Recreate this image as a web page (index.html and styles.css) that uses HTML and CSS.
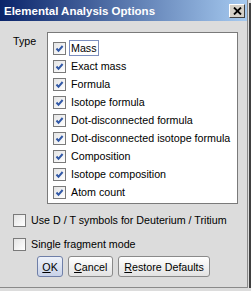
FILE: index.html
```html
<!DOCTYPE html>
<html lang="en">
<head>
  <meta charset="UTF-8">
  <title>Elemental Analysis Options</title>
  <link rel="stylesheet" href="styles.css">
</head>
<body>
  <div class="window">
    <div class="titlebar">
      <span class="title">Elemental Analysis Options</span>
      <span class="close">
        <svg width="9" height="8" viewBox="0 0 9 8"><path d="M1 0.5 L8 7.5 M8 0.5 L1 7.5" stroke="#000" stroke-width="1.8"/></svg>
      </span>
    </div>

    <div class="content">
      <div class="type-row">
        <span class="type-label">Type</span>
        <div class="list">
          <label class="check"><span class="box on"><svg width="11" height="11" viewBox="0 0 11 11"><path d="M2.5 5.5 L4.5 7.8 L8.6 3" fill="none" stroke="#3158a6" stroke-width="2"/></svg></span><span class="text focus">Mass</span></label>
          <label class="check"><span class="box on"><svg width="11" height="11" viewBox="0 0 11 11"><path d="M2.5 5.5 L4.5 7.8 L8.6 3" fill="none" stroke="#3158a6" stroke-width="2"/></svg></span><span class="text">Exact mass</span></label>
          <label class="check"><span class="box on"><svg width="11" height="11" viewBox="0 0 11 11"><path d="M2.5 5.5 L4.5 7.8 L8.6 3" fill="none" stroke="#3158a6" stroke-width="2"/></svg></span><span class="text">Formula</span></label>
          <label class="check"><span class="box on"><svg width="11" height="11" viewBox="0 0 11 11"><path d="M2.5 5.5 L4.5 7.8 L8.6 3" fill="none" stroke="#3158a6" stroke-width="2"/></svg></span><span class="text">Isotope formula</span></label>
          <label class="check"><span class="box on"><svg width="11" height="11" viewBox="0 0 11 11"><path d="M2.5 5.5 L4.5 7.8 L8.6 3" fill="none" stroke="#3158a6" stroke-width="2"/></svg></span><span class="text">Dot-disconnected formula</span></label>
          <label class="check"><span class="box on"><svg width="11" height="11" viewBox="0 0 11 11"><path d="M2.5 5.5 L4.5 7.8 L8.6 3" fill="none" stroke="#3158a6" stroke-width="2"/></svg></span><span class="text">Dot-disconnected isotope formula</span></label>
          <label class="check"><span class="box on"><svg width="11" height="11" viewBox="0 0 11 11"><path d="M2.5 5.5 L4.5 7.8 L8.6 3" fill="none" stroke="#3158a6" stroke-width="2"/></svg></span><span class="text">Composition</span></label>
          <label class="check"><span class="box on"><svg width="11" height="11" viewBox="0 0 11 11"><path d="M2.5 5.5 L4.5 7.8 L8.6 3" fill="none" stroke="#3158a6" stroke-width="2"/></svg></span><span class="text">Isotope composition</span></label>
          <label class="check"><span class="box on"><svg width="11" height="11" viewBox="0 0 11 11"><path d="M2.5 5.5 L4.5 7.8 L8.6 3" fill="none" stroke="#3158a6" stroke-width="2"/></svg></span><span class="text">Atom count</span></label>
        </div>
      </div>

      <div class="options">
        <label class="check"><span class="box"></span><span class="text">Use D / T symbols for Deuterium / Tritium</span></label>
        <label class="check"><span class="box"></span><span class="text">Single fragment mode</span></label>
      </div>

      <div class="buttons">
        <button class="btn default"><u>O</u>K</button>
        <button class="btn"><u>C</u>ancel</button>
        <button class="btn"><u>R</u>estore Defaults</button>
      </div>
    </div>
  </div>
</body>
</html>
```

FILE: styles.css
```css
html, body {
  margin: 0;
  padding: 0;
  background: #dcdcdc;
}
body {
  font-family: "Liberation Sans", Arial, sans-serif;
  font-size: 10.7px;
  color: #000;
}
.window {
  width: 247px;
  height: 287px;
  background: #dcdcdc;
  border-right: 1px solid #8a8a8a;
  border-bottom: 1px solid #8a8a8a;
  box-shadow: 1px 1px 0 #dcdcdc, 3px 3px 0 #404040;
  display: flex;
  flex-direction: column;
}
.titlebar {
  height: 21px;
  background: linear-gradient(to right, #0a246a, #a6caf0);
  display: flex;
  align-items: center;
  justify-content: space-between;
  padding: 0 2px 0 4px;
}
.title {
  color: #fff;
  font-weight: bold;
  font-size: 11.5px;
}
.close {
  width: 14px;
  height: 12px;
  background: #d4d0c8;
  border: 1px solid;
  border-color: #fff #404040 #404040 #fff;
  display: flex;
  align-items: center;
  justify-content: center;
}
.content {
  padding: 11px 0 0 13px;
}
.type-row {
  display: flex;
}
.type-label {
  width: 34px;
  padding-top: 3px;
}
.list {
  width: 179px;
  height: 164px;
  background: #fff;
  border: 1px solid #7a7a7a;
  padding: 6px 5px 0 5px;
  display: flex;
  flex-direction: column;
}
.check {
  display: flex;
  align-items: center;
  height: 18px;
  white-space: nowrap;
}
.box {
  width: 11px;
  height: 11px;
  border: 1px solid #7a7a7a;
  background: linear-gradient(135deg, #e4e4e4, #ffffff);
  display: flex;
}
.text {
  margin-left: 3px;
  padding: 0 1px;
  line-height: 14px;
  border: 1px solid transparent;
}
.text.focus {
  border-color: #7d8fbf;
}
.options {
  margin-top: 7px;
  display: flex;
  flex-direction: column;
  gap: 6px;
}
.buttons {
  margin-top: 3px;
  padding-right: 13px;
  display: flex;
  justify-content: center;
  gap: 5px;
}
.btn {
  font-family: "Liberation Sans", Arial, sans-serif;
  font-size: 10.7px;
  height: 21px;
  padding: 0 5px;
  border: 1px solid #8a8a8a;
  border-radius: 3px;
  background: linear-gradient(#ffffff, #e2e2e2);
  color: #000;
}
.btn.default {
  border-color: #6f7fa8;
  background: linear-gradient(#eef2fa, #c8d2e8);
  width: 26px;
  padding: 0;
}
```
